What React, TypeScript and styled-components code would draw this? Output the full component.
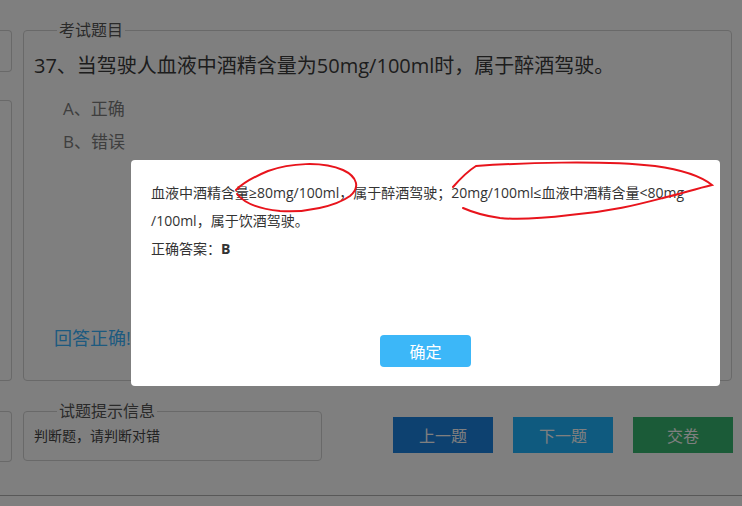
import React from 'react';
import styled, { createGlobalStyle } from 'styled-components';

const Global = createGlobalStyle`
  html, body { margin: 0; padding: 0; background: #fff; }
  body { font-family: "Open Sans", "Noto Sans CJK SC", sans-serif; color: #333; }
  * { box-sizing: border-box; }
`;

const Page = styled.div`
  position: relative;
  width: 742px;
  height: 506px;
  overflow: hidden;
  display: flex;
  flex-direction: column;
  background: #fff;
`;

const Row = styled.div<{ $top: number }>`
  display: flex;
  align-items: flex-start;
  gap: 11px;
  padding-top: ${(p) => p.$top}px;
  padding-right: 10px;
`;

const SideCol = styled.div`
  width: 12px;
  flex: none;
  display: flex;
  flex-direction: column;
  gap: 28px;
  padding-top: 10px;
`;

const SideBox = styled.div<{ $h: number }>`
  height: ${(p) => p.$h}px;
  border: 1px solid #d2d2d2;
  border-left: none;
  border-radius: 0 4px 4px 0;
`;

const Panel = styled.fieldset<{ $w: number }>`
  margin: 0;
  width: ${(p) => p.$w}px;
  flex: none;
  border: 1px solid #d2d2d2;
  border-radius: 4px;
  padding: ${(p) => (p.$w > 400 ? '12px 10px 0' : '5px 10px 0')};
  min-width: 0;
`;

const Legend = styled.legend`
  margin-left: 23px;
  padding: 0 2px;
  font-size: 16px;
  line-height: 20px;
  color: #555;
`;

const PanelBody = styled.div<{ $h: number }>`
  height: ${(p) => p.$h}px;
  display: flex;
  flex-direction: column;
`;

const Question = styled.div`
  font-size: 20px;
  line-height: 28px;
  color: #3a3a3a;
  white-space: nowrap;
`;

const Options = styled.div`
  margin-top: 12px;
  padding-left: 29px;
  display: flex;
  flex-direction: column;
`;

const Option = styled.div`
  font-size: 17px;
  line-height: 33px;
  color: #7c7c7c;
`;

const Result = styled.div`
  margin-top: auto;
  margin-bottom: 29px;
  padding-left: 20px;
  font-size: 18px;
  line-height: 26px;
  color: #3ab4ff;
`;

const Hint = styled.div`
  font-size: 14px;
  line-height: 20px;
  color: #444;
`;

const Buttons = styled.div`
  margin-left: auto;
  margin-right: -1px;
  margin-top: 16px;
  display: flex;
  gap: 20px;
`;

const NavButton = styled.button<{ $bg: string }>`
  width: 100px;
  height: 36px;
  border: none;
  background: ${(p) => p.$bg};
  color: #fff;
  font-family: inherit;
  font-size: 16px;
  padding: 0;
`;

const Footer = styled.div`
  margin-top: auto;
  height: 11px;
  border-top: 1px solid #b0b0b0;
`;

const Overlay = styled.div`
  position: absolute;
  inset: 0;
  background: rgba(0, 0, 0, 0.5);
`;

const Modal = styled.div`
  position: absolute;
  left: 131px;
  top: 160px;
  width: 589px;
  height: 226px;
  background: #fff;
  border-radius: 4px;
  padding: 19px 20px 19px;
  display: flex;
  flex-direction: column;
`;

const ModalText = styled.p`
  margin: 0;
  font-size: 14px;
  line-height: 28px;
  color: #333;
`;

const Confirm = styled.button`
  margin-top: auto;
  align-self: center;
  width: 91px;
  height: 32px;
  border: none;
  border-radius: 4px;
  background: #3cb7f8;
  color: #fff;
  font-family: inherit;
  font-size: 16px;
  padding: 0;
`;

const Marks = styled.svg`
  position: absolute;
  left: 0;
  top: 0;
  pointer-events: none;
`;

export default function App() {
  return (
    <>
      <Global />
      <Page>
        <Row $top={20}>
          <SideCol>
            <SideBox $h={42} />
            <SideBox $h={281} />
          </SideCol>
          <Panel $w={709}>
            <Legend>考试题目</Legend>
            <PanelBody $h={328}>
              <Question>37、当驾驶人血液中酒精含量为50mg/100ml时，属于醉酒驾驶。</Question>
              <Options>
                <Option>A、正确</Option>
                <Option>B、错误</Option>
              </Options>
              <Result>回答正确!</Result>
            </PanelBody>
          </Panel>
        </Row>
        <Row $top={20}>
          <SideCol>
            <SideBox $h={51} />
          </SideCol>
          <Panel $w={299}>
            <Legend>试题提示信息</Legend>
            <PanelBody $h={34}>
              <Hint>判断题，请判断对错</Hint>
            </PanelBody>
          </Panel>
          <Buttons>
            <NavButton $bg="#1a82e0">上一题</NavButton>
            <NavButton $bg="#1eb4fe">下一题</NavButton>
            <NavButton $bg="#36b670">交卷</NavButton>
          </Buttons>
        </Row>
        <Footer />
        <Overlay />
        <Modal>
          <ModalText>
            血液中酒精含量≥80mg/100ml，属于醉酒驾驶；20mg/100ml≤血液中酒精含量&lt;80mg<wbr />/100ml，属于饮酒驾驶。
          </ModalText>
          <ModalText>
            正确答案：<b>B</b>
          </ModalText>
          <Confirm>确定</Confirm>
        </Modal>
        <Marks width="742" height="506" viewBox="0 0 742 506">
          <path
            d="M236 190 C244 182 256 176 268 171 C290 163 322 161 343 170 C358 177 360 188 350 196 C336 206 306 213 280 211 C260 209 244 203 237 194"
            fill="none"
            stroke="#e8141c"
            strokeWidth="2"
            strokeLinecap="round"
          />
          <path
            d="M453 187 C460 179 468 171 476 166 C520 163 600 160 655 166 C684 170 702 177 712 185 C695 189 680 194 663 198 C640 204 610 212 570 215 C545 218 520 220 500 218 C485 216 472 212 463 208"
            fill="none"
            stroke="#e8141c"
            strokeWidth="2"
            strokeLinecap="round"
          />
        </Marks>
      </Page>
    </>
  );
}
